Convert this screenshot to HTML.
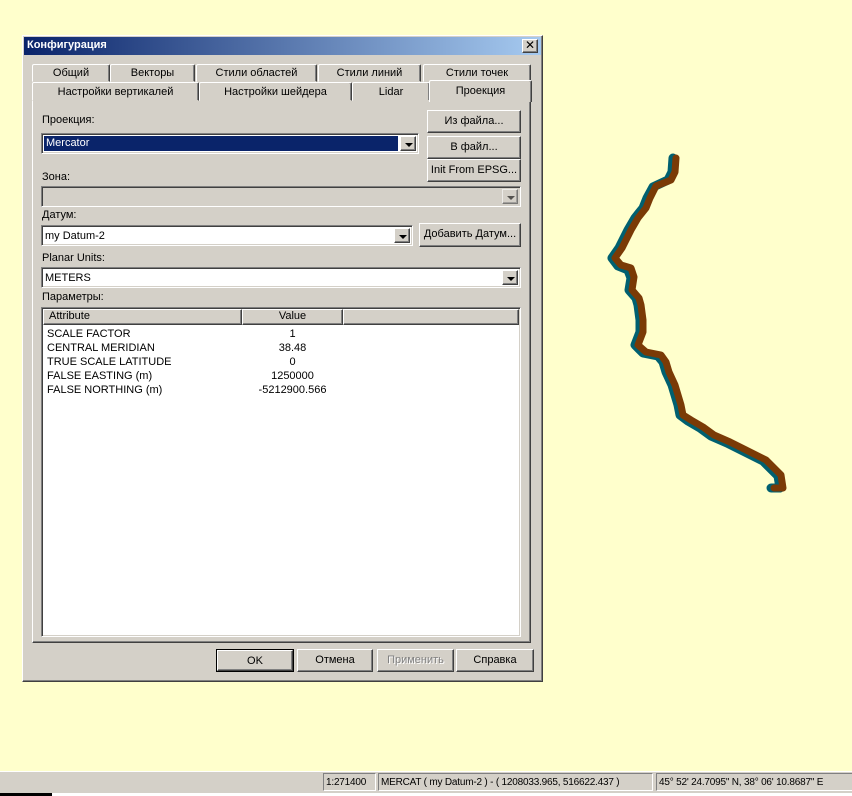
<!DOCTYPE html>
<html><head><meta charset="utf-8"><style>
*{margin:0;padding:0;box-sizing:border-box}
body{width:852px;height:796px;background:#ffffcc;position:relative;overflow:hidden;font-family:"Liberation Sans","DejaVu Sans",sans-serif;font-size:11px;color:#000}
.a{position:absolute}
.out{border:1px solid;border-color:#fff #404040 #404040 #fff;box-shadow:inset -1px -1px 0 #808080,inset 1px 1px 0 #d4d0c8}
.in{border:1px solid;border-color:#808080 #fff #fff #808080;box-shadow:inset 1px 1px 0 #404040,inset -1px -1px 0 #d4d0c8}
.btn{background:#d4d0c8;text-align:center;line-height:19px}
.tab{background:#d4d0c8;border:1px solid;border-color:#fff #404040 transparent #fff;border-radius:2px 2px 0 0;text-align:center;line-height:16px;box-shadow:inset -1px 0 0 #808080}
.dd{position:absolute;right:2px;top:2px;width:16px;height:15px;background:#d4d0c8}
.dd:after{content:"";position:absolute;left:4px;top:6px;border:4px solid transparent;border-top:4px solid #000;border-bottom:0}
.lbl{position:absolute;font-size:11px}
.sb{position:absolute;top:773px;height:18px;padding:2px 2px;line-height:13px;font-size:10px;letter-spacing:-0.2px;white-space:nowrap;overflow:hidden;border:1px solid;border-color:#808080 #fff #fff #808080}
</style></head><body>
<svg class="a" style="left:0;top:0" width="852" height="796">
<polyline fill="none" stroke="#006070" stroke-width="9" stroke-linejoin="round" stroke-linecap="round" points="673,158 672,172 668,180 653,187 647,198 643,208 635,218 628,230 623,240 619,248 612,258 618,266 628,270 631,278 629,290 636,298 638,305 640,320 640,332 635,345 643,353 658,356 663,362 666,372 672,385 675,395 678,405 680,415 688,421 700,428 711,436 727,443 743,451 763,461 778,476 780,488 771,488"/>
<polyline fill="none" stroke="#7a3a06" stroke-width="7" stroke-linejoin="round" stroke-linecap="round" points="676,158 675,172 671,180 656,186 650,198 646,208 638,218 631,230 626,240 622,248 615,258 621,265 631,268 634,277 632,290 639,298 641,305 643,320 643,332 638,345 646,352 661,355 666,362 669,372 675,385 678,395 681,405 683,415 691,420 703,427 714,435 730,442 746,450 766,460 781,475 783,488 774,488"/>
</svg>
<!-- dialog -->
<div class="a out" style="left:22px;top:35px;width:521px;height:647px;background:#d4d0c8"></div>
<div class="a" style="left:24px;top:37px;width:517px;height:18px;background:linear-gradient(to right,#0a246a,#a6caf0)"></div>
<div class="a" style="left:27px;top:39px;color:#fff;font-weight:bold;font-size:11px">Конфигурация</div>
<div class="a out btn" style="left:522px;top:39px;width:16px;height:14px;line-height:11px;font-weight:bold;font-size:12px">✕</div>
<!-- tabs row1 -->
<div class="a tab" style="left:32px;top:64px;width:78px;height:18px">Общий</div>
<div class="a tab" style="left:110px;top:64px;width:85px;height:18px">Векторы</div>
<div class="a tab" style="left:196px;top:64px;width:121px;height:18px">Стили областей</div>
<div class="a tab" style="left:318px;top:64px;width:103px;height:18px">Стили линий</div>
<div class="a tab" style="left:423px;top:64px;width:108px;height:18px">Стили точек</div>
<!-- panel -->
<div class="a" style="left:32px;top:100px;width:499px;height:543px;background:#d4d0c8;border:1px solid;border-color:#fff #404040 #404040 #fff;box-shadow:inset -1px -1px 0 #808080"></div>
<!-- tabs row2 -->
<div class="a tab" style="left:32px;top:82px;width:167px;height:19px;line-height:18px">Настройки вертикалей</div>
<div class="a tab" style="left:199px;top:82px;width:153px;height:19px;line-height:18px">Настройки шейдера</div>
<div class="a tab" style="left:352px;top:82px;width:78px;height:19px;line-height:18px">Lidar</div>
<div class="a tab" style="left:429px;top:80px;width:103px;height:22px;line-height:20px;border-bottom:none;z-index:2">Проекция</div>
<!-- content -->
<div class="lbl" style="left:42px;top:114px">Проекция:</div>
<div class="a in" style="left:41px;top:133px;width:378px;height:21px;background:#fff">
 <div class="a" style="left:2px;top:2px;width:354px;height:15px;background:#0a246a;color:#fff;padding-left:2px;line-height:15px">Mercator</div>
 <div class="dd out"></div></div>
<div class="a out btn" style="left:427px;top:110px;width:94px;height:23px;line-height:20px">Из файла...</div>
<div class="a out btn" style="left:427px;top:136px;width:94px;height:23px;line-height:20px">В файл...</div>
<div class="a out btn" style="left:427px;top:159px;width:94px;height:23px;line-height:20px">Init From EPSG...</div>
<div class="lbl" style="left:42px;top:171px">Зона:</div>
<div class="a in" style="left:41px;top:186px;width:480px;height:21px;background:#d4d0c8"><div class="dd out" style="opacity:.6"></div></div>
<div class="lbl" style="left:42px;top:209px">Датум:</div>
<div class="a in" style="left:41px;top:225px;width:372px;height:21px;background:#fff;padding:3px 3px;line-height:14px">my Datum-2<div class="dd out"></div></div>
<div class="a out btn" style="left:419px;top:223px;width:102px;height:24px;line-height:21px">Добавить Датум...</div>
<div class="lbl" style="left:42px;top:252px">Planar Units:</div>
<div class="a in" style="left:41px;top:267px;width:480px;height:21px;background:#fff;padding:3px 3px;line-height:14px">METERS<div class="dd out"></div></div>
<div class="lbl" style="left:42px;top:291px">Параметры:</div>
<div class="a in" style="left:41px;top:307px;width:480px;height:330px;background:#fff"></div>
<div class="a out" style="left:43px;top:309px;width:199px;height:16px;background:#d4d0c8;padding-left:5px;line-height:13px">Attribute</div>
<div class="a out" style="left:242px;top:309px;width:101px;height:16px;background:#d4d0c8;text-align:center;line-height:13px">Value</div>
<div class="a out" style="left:343px;top:309px;width:176px;height:16px;background:#d4d0c8"></div>
<div class="a" style="left:47px;top:327px;line-height:14px">SCALE FACTOR<br>CENTRAL MERIDIAN<br>TRUE SCALE LATITUDE<br>FALSE EASTING (m)<br>FALSE NORTHING (m)</div>
<div class="a" style="left:242px;top:327px;width:101px;text-align:center;line-height:14px">1<br>38.48<br>0<br>1250000<br>-5212900.566</div>
<!-- bottom buttons -->
<div class="a btn" style="left:216px;top:649px;width:78px;height:23px;border:1px solid #000;line-height:20px"><div class="out" style="position:absolute;inset:0">OK</div></div>
<div class="a out btn" style="left:297px;top:649px;width:76px;height:23px;line-height:20px">Отмена</div>
<div class="a out btn" style="left:377px;top:649px;width:77px;height:23px;line-height:20px;color:#808080;text-shadow:1px 1px 0 #fff">Применить</div>
<div class="a out btn" style="left:456px;top:649px;width:78px;height:23px;line-height:20px">Справка</div>
<!-- status bar -->
<div class="a" style="left:0;top:771px;width:852px;height:22px;background:#d4d0c8;border-top:1px solid #fff"></div>
<div class="sb" style="left:323px;width:53px">1:271400</div>
<div class="sb" style="left:378px;width:275px">MERCAT ( my Datum-2 ) - ( 1208033.965, 516622.437 )</div>
<div class="sb" style="left:656px;width:200px">45° 52' 24.7095" N, 38° 06' 10.8687" E</div>
<div class="a" style="left:0;top:793px;width:852px;height:3px;background:#fff"></div>
<div class="a" style="left:0;top:793px;width:52px;height:3px;background:#000"></div>
</body></html>
